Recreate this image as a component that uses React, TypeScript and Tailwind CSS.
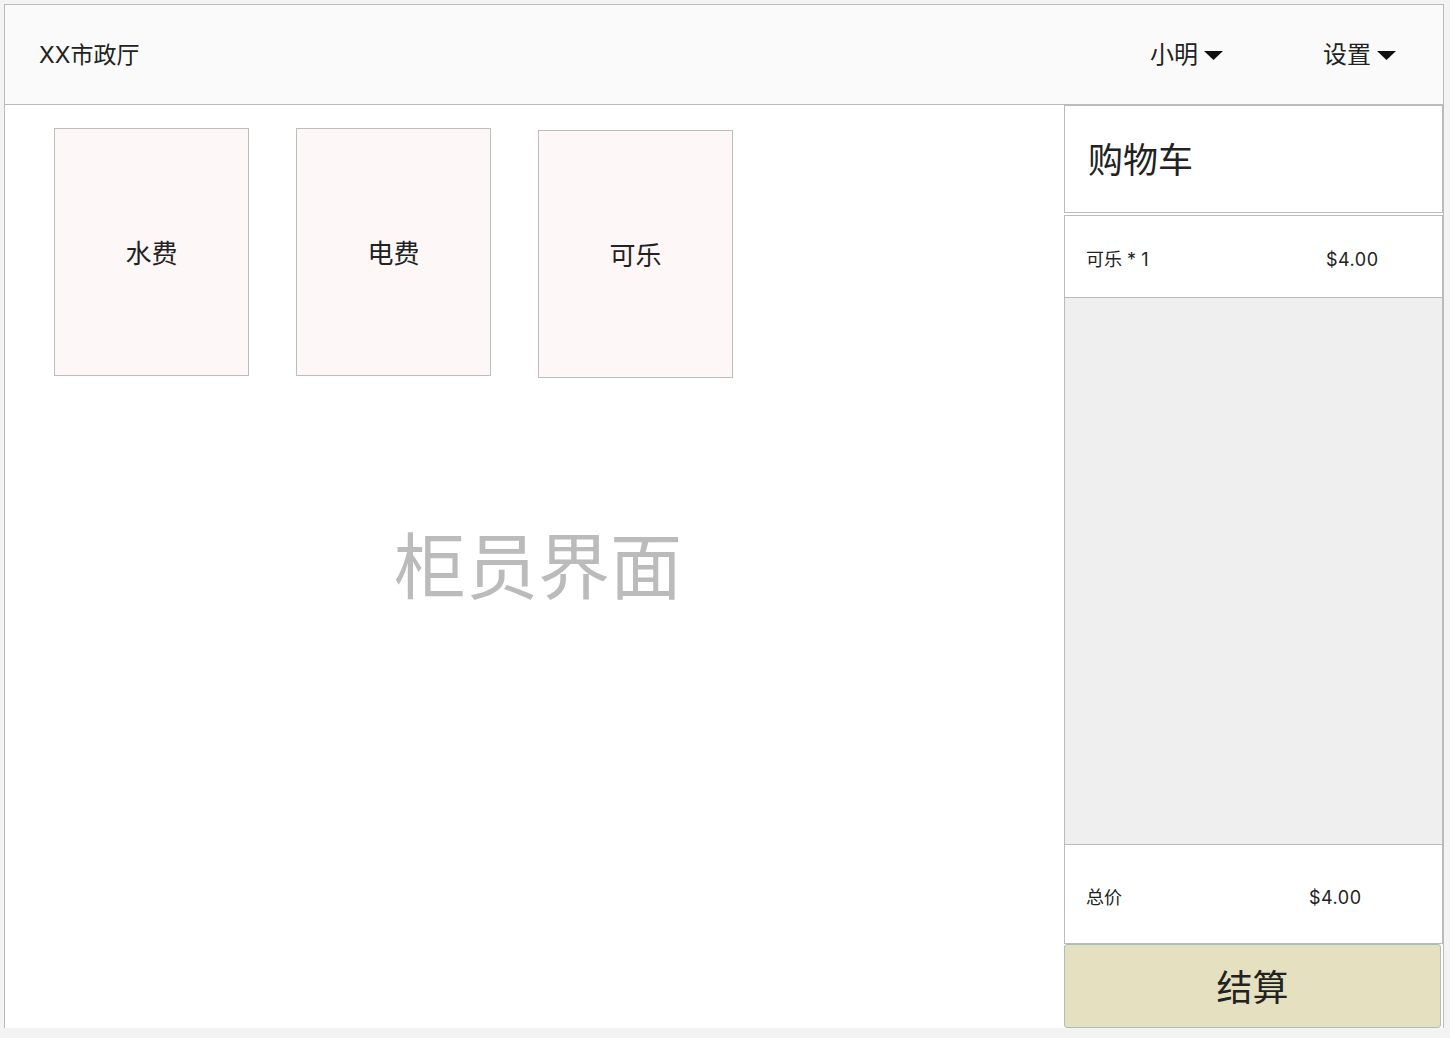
import React from "react";

const FONT = "font-['Inter','Noto_Sans_CJK_SC',sans-serif]";

function Caret() {
  return (
    <svg width="19" height="9" viewBox="0 0 19 9" className="ml-[6px] mt-[1px]">
      <polygon points="0,0 19,0 9.5,9" fill="#111" />
    </svg>
  );
}

function Card({ label, extra = "" }: { label: string; extra?: string }) {
  return (
    <div
      className={`w-[195px] h-[248px] shrink-0 border border-[#bdbdbd] bg-[#fdf7f7] flex items-center justify-center pt-[3px] text-[26px] text-[#222] ${extra}`}
    >
      {label}
    </div>
  );
}

export default function App() {
  return (
    <div className={`w-[1450px] h-[1038px] bg-[#f3f3f3] pt-1 pl-1 ${FONT}`}>
      <div className="w-[1440px] h-[1024px] bg-white border-l border-t border-r border-[#bbbbbb] flex flex-col">
        <header className="h-[100px] shrink-0 bg-[#fafafa] border-b border-[#bbbbbb] flex items-center justify-between pl-[34px] pr-[47px] pt-[1px] text-[23px] text-[#222]">
          <div>XX市政厅</div>
          <div className="flex items-center gap-[100px] text-[24px]">
            <div className="flex items-center">
              小明
              <Caret />
            </div>
            <div className="flex items-center">
              设置
              <Caret />
            </div>
          </div>
        </header>
        <div className="flex-1 flex min-h-0">
          <div className="flex-1 relative">
            <div className="flex items-start gap-[47px] pl-[49px] pt-[23px]">
              <Card label="水费" />
              <Card label="电费" />
              <Card label="可乐" extra="mt-[2px]" />
            </div>
            <div className="absolute inset-0 flex items-center justify-center pt-[1px] pl-[7px] pointer-events-none">
              <span className="text-[72px] text-[#bbbbbb]">柜员界面</span>
            </div>
          </div>
          <div className="w-[379px] shrink-0 flex flex-col">
            <div className="h-[108px] shrink-0 border border-[#bbbbbb] flex items-center pl-[23px] pt-[3px] text-[35px] text-[#222]">
              购物车
            </div>
            <div className="h-[83px] mt-[2px] shrink-0 border border-[#bbbbbb] flex items-center pl-[21px] pt-[6px] text-[18px] text-[#222]">
              <div className="w-[240px]">可乐 * 1</div>
              <div className="tracking-[0.5px]">$4.00</div>
            </div>
            <div className="flex-1 bg-[#efefef] border-x border-[#bbbbbb]" />
            <div className="h-[100px] shrink-0 border border-[#bbbbbb] flex items-center pl-[21px] pt-[6px] text-[18px] text-[#222]">
              <div className="w-[223px]">总价</div>
              <div className="tracking-[0.5px]">$4.00</div>
            </div>
            <button className="h-[84px] shrink-0 mr-[2px] bg-[#e5e1c0] border border-[#a9c0ba] rounded-[3px] flex items-center justify-center pt-[4px] text-[36px] text-[#222]">
              结算
            </button>
          </div>
        </div>
      </div>
    </div>
  );
}
